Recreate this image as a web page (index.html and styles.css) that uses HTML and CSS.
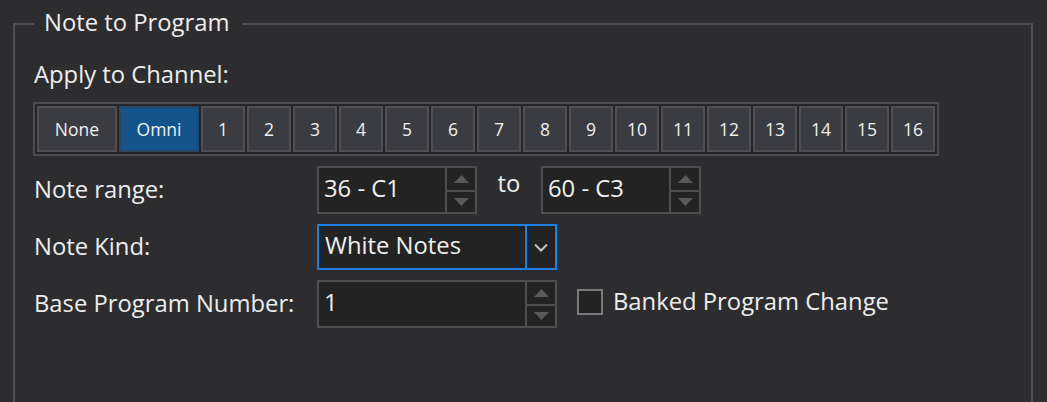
FILE: index.html
```html
<!DOCTYPE html>
<html>
<head>
<meta charset="utf-8">
<link rel="stylesheet" href="styles.css">
</head>
<body>
<fieldset class="group">
  <legend class="group-title">Note to Program</legend>
  <div class="section-label">Apply to Channel:</div>
  <div class="channel-strip">
    <div class="ch-btn wide">None</div>
    <div class="ch-btn wide active">Omni</div>
    <div class="ch-btn">1</div>
    <div class="ch-btn">2</div>
    <div class="ch-btn">3</div>
    <div class="ch-btn">4</div>
    <div class="ch-btn">5</div>
    <div class="ch-btn">6</div>
    <div class="ch-btn">7</div>
    <div class="ch-btn">8</div>
    <div class="ch-btn">9</div>
    <div class="ch-btn">10</div>
    <div class="ch-btn">11</div>
    <div class="ch-btn">12</div>
    <div class="ch-btn">13</div>
    <div class="ch-btn">14</div>
    <div class="ch-btn">15</div>
    <div class="ch-btn">16</div>
  </div>

  <div class="row row-tall">
    <div class="row-label">Note range:</div>
    <div class="spin spin-short">
      <div class="spin-text">36 - C1</div>
      <div class="spin-btns">
        <div class="spin-up"><svg width="15" height="8" viewBox="0 0 15 8"><polygon points="7.5,0 15,8 0,8" fill="#5a5a5c"/></svg></div>
        <div class="spin-down"><svg width="15" height="8" viewBox="0 0 15 8"><polygon points="0,0 15,0 7.5,8" fill="#5a5a5c"/></svg></div>
      </div>
    </div>
    <div class="to-label">to</div>
    <div class="spin spin-short">
      <div class="spin-text">60 - C3</div>
      <div class="spin-btns">
        <div class="spin-up"><svg width="15" height="8" viewBox="0 0 15 8"><polygon points="7.5,0 15,8 0,8" fill="#5a5a5c"/></svg></div>
        <div class="spin-down"><svg width="15" height="8" viewBox="0 0 15 8"><polygon points="0,0 15,0 7.5,8" fill="#5a5a5c"/></svg></div>
      </div>
    </div>
  </div>

  <div class="row row-combo">
    <div class="row-label">Note Kind:</div>
    <div class="combo">
      <div class="combo-text">White Notes</div>
      <div class="combo-btn"><svg width="14" height="9" viewBox="0 0 14 9"><polyline points="1,1.5 7,7.5 13,1.5" fill="none" stroke="#c4c4c4" stroke-width="2"/></svg></div>
    </div>
  </div>

  <div class="row row-tall">
    <div class="row-label">Base Program Number:</div>
    <div class="spin spin-long">
      <div class="spin-text">1</div>
      <div class="spin-btns">
        <div class="spin-up"><svg width="15" height="8" viewBox="0 0 15 8"><polygon points="7.5,0 15,8 0,8" fill="#5a5a5c"/></svg></div>
        <div class="spin-down"><svg width="15" height="8" viewBox="0 0 15 8"><polygon points="0,0 15,0 7.5,8" fill="#5a5a5c"/></svg></div>
      </div>
    </div>
    <div class="check">
      <div class="check-box"></div>
      <div class="check-label">Banked Program Change</div>
    </div>
  </div>
</fieldset>
</body>
</html>
```

FILE: styles.css
```css
html, body {
  margin: 0;
  padding: 0;
  height: 402px;
  overflow: hidden;
  background: #2d2d30;
}

body {
  font-family: "Open Sans", "Noto Sans", sans-serif;
  font-size: 23.8px;
  color: #ededed;
}

.group {
  margin: 9px 14px 0 13px;
  border: 2px solid #505052;
  padding: 0 0 0 19px;
  min-height: 460px;
}

.group-title {
  line-height: 26px;
  padding: 0 12px 4px 10px;
  color: #ededed;
}

.section-label {
  line-height: 32px;
  margin-top: 19px;
  height: 32px;
}

.channel-strip {
  display: inline-flex;
  gap: 2px;
  margin-top: 12px;
  margin-left: -1px;
  padding: 2px;
  border: 2px solid #4b4b4e;
  background: #252528;
}

.ch-btn {
  box-sizing: border-box;
  width: 44px;
  height: 46px;
  border: 2px solid #505054;
  background: #3b3c41;
  color: #f0f0f0;
  font-size: 17.5px;
  display: flex;
  align-items: center;
  justify-content: center;
}

.ch-btn.wide {
  width: 80px;
}

.ch-btn.active {
  background: #13548d;
  border-color: #2b4760;
}

.row {
  display: flex;
  align-items: center;
  margin-top: 10px;
}

.row-tall {
  height: 48px;
}

.row-combo {
  height: 46px;
}

.row-label {
  width: 283px;
  line-height: 32px;
  padding-bottom: 3px;
}

.spin {
  box-sizing: border-box;
  height: 48px;
  display: flex;
  border: 2px solid #4f4f52;
  background: #232323;
}

.spin-short {
  width: 160px;
}

.spin-long {
  width: 240px;
}

.spin-text {
  flex: 1;
  display: flex;
  align-items: center;
  padding-left: 5px;
  padding-bottom: 4px;
  line-height: 32px;
  color: #f0f0f0;
}

.spin-btns {
  width: 28px;
  border-left: 2px solid #4f4f52;
  display: flex;
  flex-direction: column;
}

.spin-up {
  height: 22px;
  display: flex;
  align-items: center;
  justify-content: center;
}

.spin-down {
  flex: 1;
  border-top: 2px solid #4f4f52;
  display: flex;
  align-items: center;
  justify-content: center;
}

.to-label {
  width: 64px;
  text-align: center;
  line-height: 32px;
  padding-bottom: 14px;
}

.combo {
  box-sizing: border-box;
  width: 240px;
  height: 46px;
  display: flex;
  border: 2px solid #1a80e4;
  background: #232323;
}

.combo-text {
  flex: 1;
  display: flex;
  align-items: center;
  padding-left: 6px;
  padding-bottom: 4px;
  color: #f0f0f0;
}

.combo-btn {
  width: 28px;
  border-left: 2px solid #1a80e4;
  display: flex;
  align-items: center;
  justify-content: center;
}

.check {
  display: flex;
  align-items: center;
  margin-left: 20px;
  margin-bottom: 5px;
}

.check-box {
  box-sizing: border-box;
  width: 26px;
  height: 26px;
  border: 2px solid #7a7a7c;
  background: #232323;
}

.check-label {
  margin-left: 10px;
  line-height: 32px;
  padding-bottom: 2px;
}
```
